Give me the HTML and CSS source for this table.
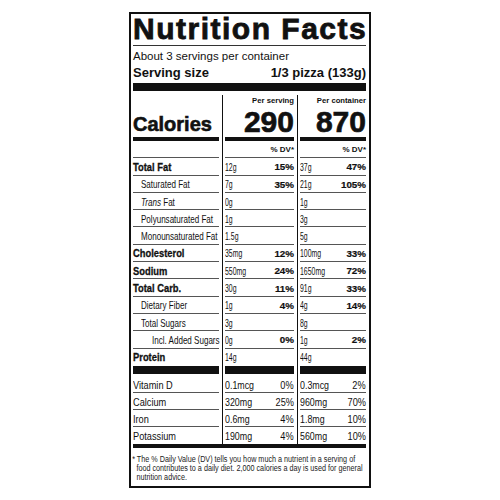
FILE: index.html
```html
<!DOCTYPE html>
<html lang="en">
  <head>
    <meta charset="UTF-8" />
    <meta name="viewport" content="width=device-width, initial-scale=1.0" />
    <title>Nutrition Facts</title>
    <link rel="stylesheet" href="styles.css">
  </head>
  <body>
    <div class="label">
      <h1 class="title">Nutrition Facts</h1>
      <p class="servings">About 3 servings per container</p>
      <p class="size"><span>Serving size</span><span>1/3 pizza (133g)</span></p>
      <div class="bar"></div>

      <div class="facts">
        <div class="row cal">
          <div class="cell"><span class="big">Calories</span></div>
          <div class="cell"><small>Per serving</small><span class="num">290</span></div>
          <div class="cell"><small>Per container</small><span class="num">870</span></div>
        </div>

        <div class="row">
          <div class="cell"></div>
          <div class="cell dv">% DV*</div>
          <div class="cell dv">% DV*</div>
        </div>

        <div class="row">
          <div class="cell"><span class="name">Total Fat</span></div>
          <div class="cell"><span class="amt">12g</span><b>15%</b></div>
          <div class="cell"><span class="amt">37g</span><b>47%</b></div>
        </div>
        <div class="row">
          <div class="cell"><span class="lbl sub">Saturated Fat</span></div>
          <div class="cell"><span class="amt">7g</span><b>35%</b></div>
          <div class="cell"><span class="amt">21g</span><b>105%</b></div>
        </div>
        <div class="row">
          <div class="cell"><span class="lbl sub"><i>Trans</i> Fat</span></div>
          <div class="cell"><span class="amt">0g</span></div>
          <div class="cell"><span class="amt">1g</span></div>
        </div>
        <div class="row">
          <div class="cell"><span class="lbl sub">Polyunsaturated Fat</span></div>
          <div class="cell"><span class="amt">1g</span></div>
          <div class="cell"><span class="amt">3g</span></div>
        </div>
        <div class="row">
          <div class="cell"><span class="lbl sub">Monounsaturated Fat</span></div>
          <div class="cell"><span class="amt">1.5g</span></div>
          <div class="cell"><span class="amt">5g</span></div>
        </div>
        <div class="row">
          <div class="cell"><span class="name">Cholesterol</span></div>
          <div class="cell"><span class="amt">35mg</span><b>12%</b></div>
          <div class="cell"><span class="amt">100mg</span><b>33%</b></div>
        </div>
        <div class="row">
          <div class="cell"><span class="name">Sodium</span></div>
          <div class="cell"><span class="amt">550mg</span><b>24%</b></div>
          <div class="cell"><span class="amt">1650mg</span><b>72%</b></div>
        </div>
        <div class="row">
          <div class="cell"><span class="name">Total Carb.</span></div>
          <div class="cell"><span class="amt">30g</span><b>11%</b></div>
          <div class="cell"><span class="amt">91g</span><b>33%</b></div>
        </div>
        <div class="row">
          <div class="cell"><span class="lbl sub">Dietary Fiber</span></div>
          <div class="cell"><span class="amt">1g</span><b>4%</b></div>
          <div class="cell"><span class="amt">4g</span><b>14%</b></div>
        </div>
        <div class="row">
          <div class="cell"><span class="lbl sub">Total Sugars</span></div>
          <div class="cell"><span class="amt">3g</span></div>
          <div class="cell"><span class="amt">8g</span></div>
        </div>
        <div class="row">
          <div class="cell"><span class="lbl sub2">Incl. Added Sugars</span></div>
          <div class="cell"><span class="amt">0g</span><b>0%</b></div>
          <div class="cell"><span class="amt">1g</span><b>2%</b></div>
        </div>
        <div class="row protein">
          <div class="cell"><span class="name">Protein</span></div>
          <div class="cell"><span class="amt">14g</span></div>
          <div class="cell"><span class="amt">44g</span></div>
        </div>

        <div class="row vit first">
          <div class="cell"><span class="lbl">Vitamin D</span></div>
          <div class="cell"><span class="amt">0.1mcg</span><span class="pct">0%</span></div>
          <div class="cell"><span class="amt">0.3mcg</span><span class="pct">2%</span></div>
        </div>
        <div class="row vit">
          <div class="cell"><span class="lbl">Calcium</span></div>
          <div class="cell"><span class="amt">320mg</span><span class="pct">25%</span></div>
          <div class="cell"><span class="amt">960mg</span><span class="pct">70%</span></div>
        </div>
        <div class="row vit">
          <div class="cell"><span class="lbl">Iron</span></div>
          <div class="cell"><span class="amt">0.6mg</span><span class="pct">4%</span></div>
          <div class="cell"><span class="amt">1.8mg</span><span class="pct">10%</span></div>
        </div>
        <div class="row vit last">
          <div class="cell"><span class="lbl">Potassium</span></div>
          <div class="cell"><span class="amt">190mg</span><span class="pct">4%</span></div>
          <div class="cell"><span class="amt">560mg</span><span class="pct">10%</span></div>
        </div>
      </div>

      <div class="bar thin"></div>
      <p class="note">* The % Daily Value (DV) tells you how much a nutrient in a serving of<br>food contributes to a daily diet. 2,000 calories a day is used for general<br>nutrition advice.</p>
    </div>
  </body>
</html>
```

FILE: styles.css
```css
/* page */
body {
  margin: 0;
  background-color: #ffffff;
  font-family: "Liberation Sans", Arial, sans-serif;
  color: #111111;
}

.label {
  width: 233px;
  margin: 12px auto 0;
  padding: 0 3px 4px 2px;
  border: 2px solid #111111;
}

/* header */
.title {
  margin: 0;
  padding-bottom: 1px;
  border-bottom: 1px solid #333333;
  font-size: 30px;
  line-height: 30px;
  font-weight: 700;
  letter-spacing: 1.5px;
  -webkit-text-stroke: 0.8px #111111;
  white-space: nowrap;
}

.servings {
  margin: 0;
  padding-top: 4px;
  font-size: 11.5px;
  line-height: 13px;
}

.size {
  display: flex;
  justify-content: space-between;
  margin: 2px 0 0;
  font-size: 13px;
  line-height: 15px;
  font-weight: 700;
}

.bar {
  height: 8px;
  margin-top: 3px;
  background-color: #111111;
}

.bar.thin {
  height: 4px;
  margin-top: 0;
}

/* table */
.facts {
  display: grid;
  grid-template-columns: 89px 75px 69px;
  margin-top: 4px;
}

.row {
  display: contents;
}

.cell {
  box-sizing: border-box;
  height: 17.3px;
  display: flex;
  align-items: center;
  justify-content: space-between;
  padding: 0 3px 0 0;
  background: linear-gradient(#555555, #555555) bottom / 100% 1px no-repeat content-box;
  font-size: 10px;
  white-space: nowrap;
}

.cell + .cell {
  border-left: 1px solid #111111;
  padding-left: 2px;
}

.cell:nth-child(3) {
  padding-right: 0;
}

.cell b {
  font-size: 9.8px;
  font-weight: 700;
  -webkit-text-stroke: 0.2px #111111;
}

/* condensed text: narrowed glyphs */
.name,
.lbl,
.amt,
.pct {
  display: inline-block;
  transform-origin: 0 50%;
}

.name {
  font-size: 11px;
  font-weight: 700;
  transform: scaleX(0.85);
  -webkit-text-stroke: 0.3px #111111;
}

.lbl {
  font-size: 11.5px;
  transform: scaleX(0.7);
}

.amt {
  font-size: 11px;
  transform: scaleX(0.63);
}

.sub {
  margin-left: 8px;
}

.sub2 {
  margin-left: 19px;
}

/* calories */
.cal > .cell {
  height: 46px;
  flex-direction: column;
  align-items: flex-end;
  justify-content: flex-end;
  background-image: linear-gradient(#111111, #111111);
  background-size: 100% 4px;
}

.cal > .cell:first-child {
  align-items: flex-start;
}

.cal small {
  margin-bottom: 3px;
  font-size: 7.7px;
  line-height: 9px;
  font-weight: 700;
}

.big {
  margin-bottom: 6px;
  font-size: 20px;
  line-height: 22px;
  font-weight: 700;
  -webkit-text-stroke: 0.6px #111111;
}

.num {
  margin-bottom: 5px;
  font-size: 30px;
  line-height: 28px;
  font-weight: 700;
  -webkit-text-stroke: 0.7px #111111;
}

.dv {
  justify-content: flex-end;
  font-size: 8px;
  font-weight: 700;
}

.protein > .cell {
  height: 25.3px;
  align-items: flex-start;
  line-height: 17px;
  background-image: linear-gradient(#111111, #111111);
  background-size: 100% 8px;
}

/* vitamins and minerals */
.vit > .cell {
  height: 17px;
  font-size: 11px;
}

.vit .lbl {
  font-size: 11.5px;
  transform: scaleX(0.8);
}

.vit .amt {
  font-size: 11.5px;
  transform: scaleX(0.77);
}

.vit .pct {
  font-size: 11.5px;
  transform: scaleX(0.8);
  transform-origin: 100% 50%;
}

.vit.first > .cell {
  height: 19.3px;
  padding-top: 2px;
}

.vit.last > .cell {
  background: none;
}

.note {
  margin: 7px 0 0;
  padding-left: 4px;
  text-indent: -5px;
  font-size: 8.5px;
  line-height: 9px;
  color: #222222;
  white-space: nowrap;
  transform: scaleX(0.85);
  transform-origin: 0 0;
}
```
